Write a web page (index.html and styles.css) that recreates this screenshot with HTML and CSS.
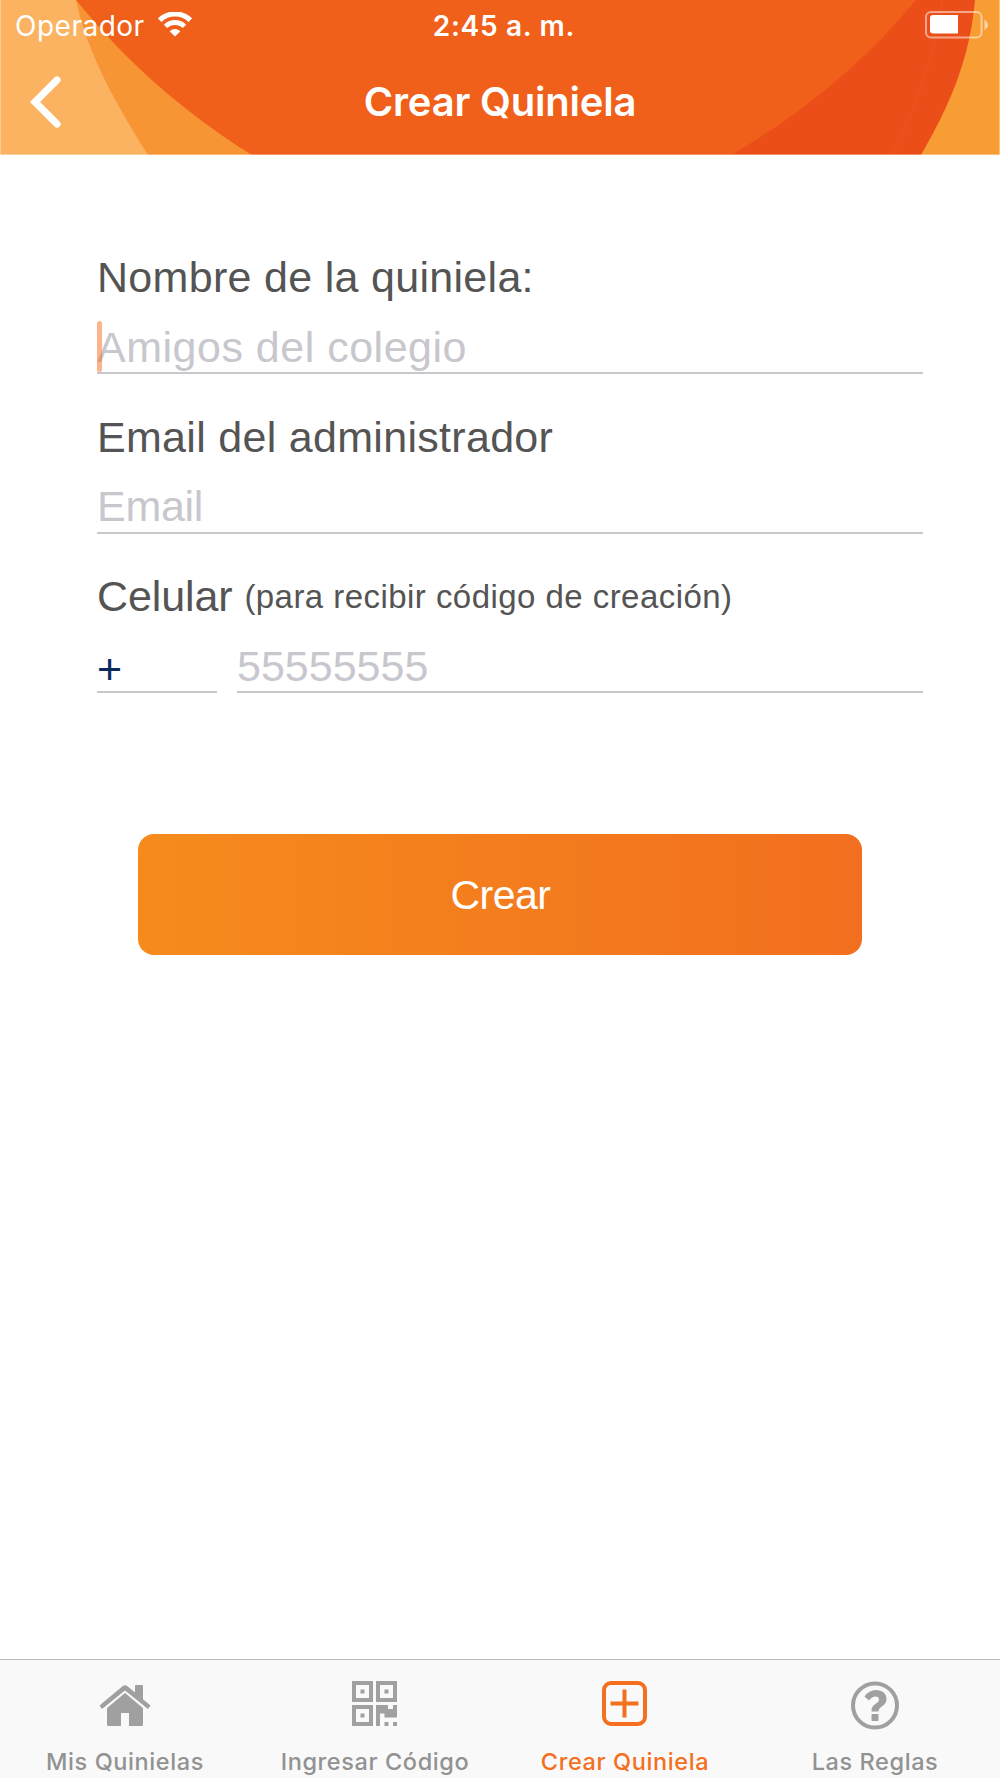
FILE: index.html
```html
<!DOCTYPE html>
<html lang="es">
<head>
    <meta charset="UTF-8">
    <meta name="viewport" content="width=device-width, initial-scale=1.0">
    <title>Crear Quiniela</title>
    <link rel="stylesheet" href="styles.css">
</head>
<body>
    <header>
        <svg class="header-bg" viewBox="0 0 1000 155" preserveAspectRatio="none">
            <rect width="1000" height="155" fill="#f0601a"/>
            <path d="M0 0H76C115 48 170 104 252 155H0Z" fill="#f79433"/>
            <path d="M0 0H76C88 55 116 104 148 155H0Z" fill="#fbb362"/>
            <path d="M916 0C866 60 808 110 731 155H1000V0Z" fill="#eb4e19"/>
            <path d="M942 0C935 55 918 105 891 155" fill="none" stroke="#ed5620" stroke-width="1"/>
            <path d="M975 0C970 55 953 100 921 155H1000V0Z" fill="#f79d33"/>
            <path d="M0 154.500H1000M.5 0V155M999.500 0V155" stroke="#fff" stroke-opacity=".35"/>
        </svg>
        <div class="status-bar">
            <div class="carrier">
                <span>Operador</span>
                <svg width="34" height="25" viewBox="0 0 34 25" fill="none" stroke="#fff">
                    <path d="M1.700 8.200A22 22 0 0 1 32.300 8.200" stroke-width="5.200"/>
                    <path d="M7.500 14.400A13.500 13.500 0 0 1 26.500 14.400" stroke-width="4.800"/>
                    <path d="M17 24.500L11.600 19.300Q17 14.800 22.400 19.300Z" fill="#fff" stroke="none"/>
                </svg>
            </div>
            <span class="time">2:45 a. m.</span>
            <svg class="battery" width="64" height="28" viewBox="0 0 64 28">
                <rect x="1" y="1" width="55.500" height="25.500" rx="5" fill="none" stroke="#fff" stroke-opacity=".5" stroke-width="2"/>
                <path d="M59.500 8.500Q63 11 63 14T59.500 19Z" fill="#fff" fill-opacity=".55"/>
                <path d="M8 4H33V22.500H8Q5 22.500 5 19.500V7Q5 4 8 4Z" fill="#fff"/>
            </svg>
        </div>
        <div class="nav-bar">
            <svg class="back" width="32" height="52" viewBox="0 0 32 52">
                <path d="M27 4L5 26L27 48" fill="none" stroke="#fff" stroke-width="7.200" stroke-linecap="round"/>
            </svg>
            <h1>Crear Quiniela</h1>
        </div>
    </header>

    <main>
        <div class="field">
            <label for="nombre">Nombre de la quiniela:</label>
            <div class="input-wrap">
                <input type="text" id="nombre" placeholder="Amigos del colegio">
                <span class="caret"></span>
            </div>
        </div>
        <div class="field">
            <label for="email">Email del administrador</label>
            <input type="email" id="email" placeholder="Email">
        </div>
        <div class="field">
            <label for="celular" class="label-phone">Celular <small>(para recibir código de creación)</small></label>
            <div class="phone">
                <input type="text" class="prefix" value="+">
                <input type="tel" id="celular" placeholder="55555555">
            </div>
        </div>
        <button class="submit">Crear</button>
    </main>

    <nav class="tabs">
        <a class="tab">
            <svg width="52" height="50" viewBox="0 0 52 50" fill="#a0a0a0">
                <path d="M.5 24.500L23.500 5.300Q26 3.300 28.500 5.300L36 11.500V5Q36 4 37 4H43Q44 4 44 5V18.200L51.500 24.500L49 28L26 9.500L3 28Z"/>
                <path d="M26 12L44 27V43.500Q44 45 42.500 45H30V32H22V45H9.500Q8 45 8 43.500V27Z"/>
            </svg>
            <span>Mis Quinielas</span>
        </a>
        <a class="tab">
            <svg width="46" height="50" viewBox="0 0 46 50" fill="#a0a0a0">
                <path fill-rule="evenodd" d="M0 0H21V21H0ZM4 4V17H17V4ZM24 0H45V21H24ZM28 4V17H41V4ZM0 24H21V45H0ZM4 28V41H17V28Z"/>
                <path d="M8.500 8.500H12.500V12.500H8.500ZM32.500 8.500H36.500V12.500H32.500ZM8.500 32.500H12.500V36.500H8.500Z"/>
                <path d="M24 24H36V28H41V24H45V36.500H32.500V32.500H28V45H24ZM32.500 41H36.500V45H32.500ZM41 41H45V45H41Z"/>
            </svg>
            <span>Ingresar Código</span>
        </a>
        <a class="tab active">
            <svg width="46" height="50" viewBox="0 0 46 50" fill="none" stroke="#f4701f" stroke-width="4">
                <rect x="2" y="2" width="41" height="41" rx="7"/>
                <path d="M8.500 22.500H36.500M22.500 8.500V36.500" stroke-linecap="butt"/>
            </svg>
            <span>Crear Quiniela</span>
        </a>
        <a class="tab">
            <svg width="48" height="50" viewBox="0 0 48 50">
                <circle cx="24" cy="24.500" r="22" fill="none" stroke="#a0a0a0" stroke-width="4"/>
                <path d="M13.500 15.500Q18 9 25 9C31.500 9 35.500 12.500 35.500 18C35.500 25.500 27.500 25 27.500 30.500H20.500C20 22.500 28 23 28 18.500C28 14.500 21.500 14.500 18 19.500Z" fill="#a0a0a0"/>
                <rect x="20.500" y="33" width="7" height="7" rx=".8" fill="#a0a0a0"/>
            </svg>
            <span>Las Reglas</span>
        </a>
    </nav>
</body>
</html>
```
FILE: styles.css
```css
* {
    box-sizing: border-box;
}
body {
    font-family: 'Liberation Sans', Arial, sans-serif;
    margin: 0;
    min-height: 1778px;
    display: flex;
    flex-direction: column;
    background-color: #fff;
    color: #545454;
}
header {
    position: relative;
    height: 155px;
    color: #fff;
    font-family: Inter, sans-serif;
}
.header-bg {
    position: absolute;
    top: 0;
    left: 0;
    width: 100%;
    height: 100%;
}
.status-bar {
    position: relative;
    display: grid;
    grid-template-columns: 1fr auto 1fr;
    align-items: center;
    height: 50px;
    padding: 1px 11px 0 15px;
    font-size: 28px;
}
.carrier {
    display: flex;
    align-items: center;
    gap: 13px;
    letter-spacing: 0.5px;
}
.carrier svg {
    margin-bottom: 2px;
}
.time {
    font-weight: 600;
    letter-spacing: 0.7px;
    margin-left: 4px;
}
.battery {
    justify-self: end;
    margin-bottom: 1px;
}
.nav-bar {
    position: relative;
    display: grid;
    grid-template-columns: 32px 1fr 32px;
    align-items: center;
    height: 104px;
    padding: 0 30px;
}
h1 {
    margin: 0;
    font-size: 40px;
    font-weight: 600;
    line-height: 48px;
    letter-spacing: -0.2px;
    text-align: center;
}
main {
    flex: 1;
    padding: 97px 77px 0 97px;
}
.field {
    margin-bottom: 37.5px;
}
label {
    display: block;
    font-size: 43px;
    line-height: 50px;
    letter-spacing: 0.3px;
    white-space: nowrap;
}
.label-phone {
    letter-spacing: -0.1px;
}
label small {
    font-size: 33px;
    line-height: 40px;
    letter-spacing: 0.45px;
    vertical-align: 3px;
}
.input-wrap {
    position: relative;
}
input {
    display: block;
    width: 100%;
    height: 72px;
    padding: 20px 0 0;
    border: none;
    border-bottom: 2px solid #c7c7cc;
    border-radius: 0;
    background: none;
    font-family: inherit;
    font-size: 43px;
    line-height: 50px;
    color: #0b2a5b;
    outline: none;
}
input::placeholder {
    color: #c7c7cd;
    opacity: 1;
}
#nombre {
    letter-spacing: 0.5px;
}
#email {
    letter-spacing: -0.3px;
}
.caret {
    position: absolute;
    left: 0;
    top: 19px;
    width: 5px;
    height: 51px;
    border-radius: 3px;
    background-color: rgba(246, 120, 50, 0.55);
}
.phone {
    display: grid;
    grid-template-columns: 120px 1fr;
    gap: 20px;
}
.phone .prefix {
    padding-top: 27px;
}
.submit {
    display: block;
    width: 724px;
    height: 121px;
    margin: 141px 0 0 41px;
    padding: 1px 0 0 1px;
    border: none;
    border-radius: 16px;
    background: linear-gradient(to right, #f68b1c, #f26f1f);
    color: #fff;
    font-family: inherit;
    font-size: 41px;
    letter-spacing: -0.5px;
}
.tabs {
    display: grid;
    grid-template-columns: repeat(4, 1fr);
    height: 119px;
    border-top: 1px solid #bdbdbd;
    background-color: #f9f9f9;
}
.tab {
    display: flex;
    flex-direction: column;
    align-items: center;
    padding-top: 21px;
    color: #929292;
    font-family: Inter, sans-serif;
    font-size: 23.5px;
    font-weight: 500;
    letter-spacing: 0.6px;
}
.tab span {
    margin-top: 17px;
    line-height: 28px;
    white-space: nowrap;
}
.tab.active {
    color: #f4701f;
}
```
